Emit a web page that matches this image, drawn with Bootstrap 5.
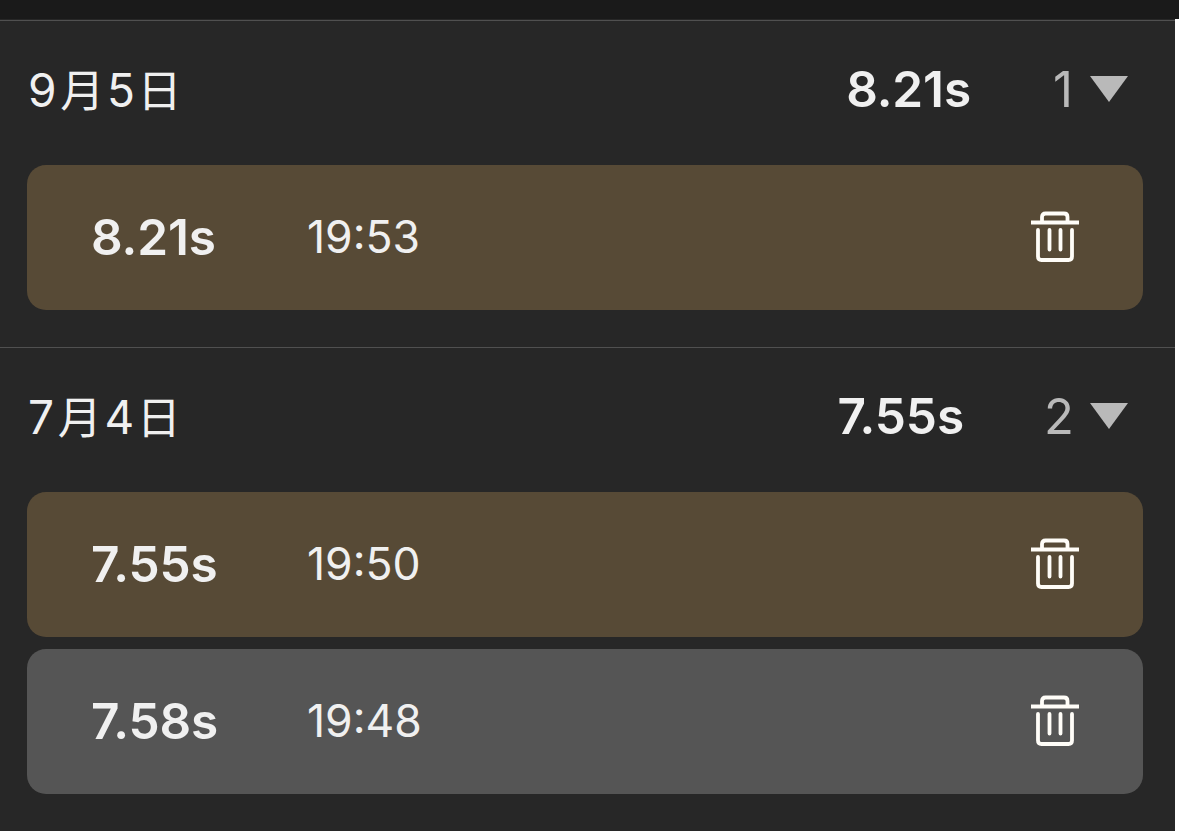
<!DOCTYPE html>
<html lang="zh-CN">
<head>
  <meta charset="UTF-8" />
  <meta name="viewport" content="width=device-width, initial-scale=1.0"/>
  <title>成绩记录</title>
  <link href="https://cdn.jsdelivr.net/npm/bootstrap@5.3.3/dist/css/bootstrap.min.css" rel="stylesheet">
  <style>
    body {
      background-color: #fff;
      color: #f0f0f0;
      font-family: Inter, "Noto Sans CJK SC", sans-serif;
      line-height: 1;
      overflow: hidden;
    }
    .top-strip {
      height: 19px;
      background-color: #1a1a1a;
    }
    .record-list {
      width: 1175px;
      height: 812px;
      padding-top: 1px;
      background-color: #272727;
    }
    .day-group {
      height: 327px;
      padding: 0 32px 0 27px;
      border-top: 1px solid #505050;
    }
    .day-head {
      height: 143.5px;
      padding: 0 15px 7px 0;
    }
    .day-date {
      padding: 0 0 0 1px;
      font-size: 46px;
      font-weight: 400;
      letter-spacing: 2.7px;
    }
    .day-date span {
      font-family: "Noto Sans CJK SC", sans-serif;
      font-size: 44px;
      font-weight: 400;
    }
    .day-date span:first-child {
      margin-left: 1px;
    }
    .best-time {
      padding-top: 1px;
      font-size: 49.5px;
      font-weight: 600;
      letter-spacing: -.1px;
    }
    .day-count {
      width: 110px;
      text-align: right;
      font-size: 49px;
      font-weight: 400;
      color: #b9b9b9;
    }
    .day-count.narrow {
      width: 103px;
      padding-right: 1px;
    }
    .caret {
      width: 38px;
      height: 26px;
      margin-left: 16px;
      fill: #b9b9b9;
    }
    .record {
      height: 145px;
      margin-bottom: 12px;
      padding: 0 63px 0 64px;
      border-radius: 19px;
      background-color: #555;
    }
    .record.best {
      background-color: #574a36;
    }
    .record-time {
      width: 216px;
      padding-top: 2px;
      font-size: 49.5px;
      font-weight: 600;
      letter-spacing: -.1px;
    }
    .record-clock {
      font-size: 44.5px;
      font-weight: 400;
    }
    .trash {
      width: 50px;
      height: 52px;
      fill: none;
      stroke: #fffdf8;
      stroke-width: 3.8;
    }
  </style>
</head>
<body>

<svg class="d-none">
  <symbol id="trash" viewBox="0 0 50 52">
    <path d="M1 11.500h48M12 11V6q0-3.500 3.500-3.500h18.500Q37.500 2.500 37.500 6v5"/>
    <path d="M8 19v26.500Q8 49 11.500 49h27q3.500 0 3.500-3.500V19" stroke-linecap="round"/>
    <path d="M19.500 19v19.500M30.500 19v19.500" stroke-linecap="round"/>
  </symbol>
  <symbol id="caret" viewBox="0 0 38 26">
    <path d="M0 0h38L19 26z"/>
  </symbol>
</svg>

<div class="top-strip"></div>
<main class="record-list">
  <section class="day-group">
    <div class="day-head d-flex align-items-center">
      <div class="day-date me-auto">9<span>月</span>5<span>日</span></div>
      <div class="best-time">8.21s</div>
      <div class="day-count narrow">1</div>
      <svg class="caret"><use href="#caret"/></svg>
    </div>
    <div class="record best d-flex align-items-center">
      <div class="record-time">8.21s</div>
      <div class="record-clock me-auto">19:53</div>
      <svg class="trash"><use href="#trash"/></svg>
    </div>
  </section>

  <section class="day-group">
    <div class="day-head d-flex align-items-center">
      <div class="day-date me-auto">7<span>月</span>4<span>日</span></div>
      <div class="best-time">7.55s</div>
      <div class="day-count">2</div>
      <svg class="caret"><use href="#caret"/></svg>
    </div>
    <div class="record best d-flex align-items-center">
      <div class="record-time">7.55s</div>
      <div class="record-clock me-auto">19:50</div>
      <svg class="trash"><use href="#trash"/></svg>
    </div>
    <div class="record d-flex align-items-center">
      <div class="record-time">7.58s</div>
      <div class="record-clock me-auto">19:48</div>
      <svg class="trash"><use href="#trash"/></svg>
    </div>
  </section>
</main>

<script src="https://cdn.jsdelivr.net/npm/bootstrap@5.3.3/dist/js/bootstrap.bundle.min.js"></script>
</body>
</html>
